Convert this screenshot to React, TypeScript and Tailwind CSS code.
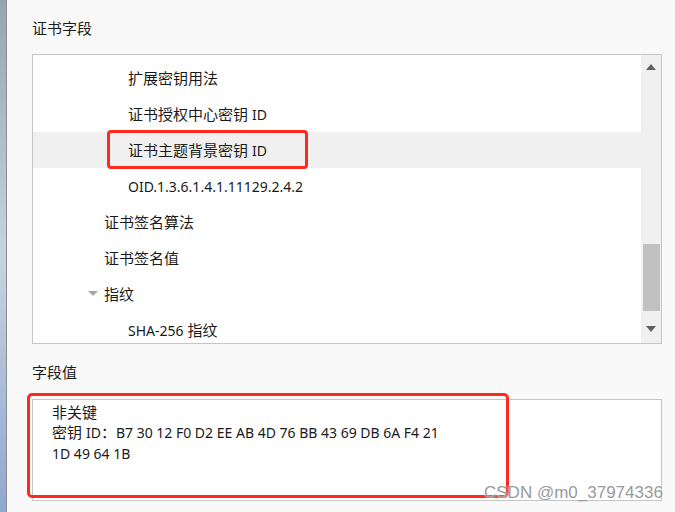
import { useState, type ReactNode } from "react";

type Row = { label: ReactNode; key: string; level: 1 | 2; expanded?: boolean };

// latin runs are a touch narrower in the original (Segoe UI), so render them at 14px
const L = ({ children }: { children: ReactNode }) => (
	<span className="text-[14px]">{children}</span>
);

const rows: Row[] = [
	{ key: "eku", label: "扩展密钥用法", level: 2 },
	{ key: "aki", label: <>证书授权中心密钥 <L>ID</L></>, level: 2 },
	{ key: "ski", label: <>证书主题背景密钥 <L>ID</L></>, level: 2 },
	{ key: "oid", label: <L>OID.1.3.6.1.4.1.11129.2.4.2</L>, level: 2 },
	{ key: "alg", label: "证书签名算法", level: 1 },
	{ key: "sig", label: "证书签名值", level: 1 },
	{ key: "fp", label: "指纹", level: 1, expanded: true },
	{ key: "sha", label: <><L>SHA-256</L> 指纹</>, level: 2 },
];

const font = {
	fontFamily: '"Noto Sans", "Noto Sans CJK SC", sans-serif',
};

export default function App() {
	const [selected, setSelected] = useState(2);

	return (
		<div
			className="relative flex h-[512px] w-[675px] overflow-hidden bg-[#f9f9f9] text-[15px] text-[#1a1a1a]"
			style={font}
		>
			{/* blurred desktop behind the dialog */}
			<div className="h-full w-[6px] shrink-0 bg-gradient-to-b from-[#9aa3b0] via-[#c9d2e0] to-[#8fa8d0]" />
			<div className="h-full w-px shrink-0 bg-[#8c8c8c]" />

			<div className="flex flex-1 flex-col pl-[25px] pr-[13px]">
				<div className="mt-[17px] h-[22px] leading-[22px]">证书字段</div>

				<div className="mt-[15px] flex h-[290px] border border-[#c6c6c6] bg-white">
					<div className="flex-1 overflow-hidden pt-[5px]">
						{rows.map((r, i) => (
							<div
								key={r.key}
								onClick={() => setSelected(i)}
								className={
									"relative flex h-9 shrink-0 items-center " +
									(i === selected ? "bg-[#f0f0f0]" : "")
								}
							>
								{r.expanded && (
									<svg
										className="absolute left-[55px] top-[15px]"
										width="10"
										height="6"
										viewBox="0 0 10 6"
									>
										<path d="M0 0H10L5 5Z" fill="#a6a6a6" />
									</svg>
								)}
								<span className={r.level === 2 ? "pl-[95px]" : "pl-[71px]"}>
									{r.label}
								</span>
							</div>
						))}
					</div>

					{/* scrollbar */}
					<div className="flex w-[20px] flex-col items-center bg-[#f0f0f0]">
						<svg className="mt-[9px]" width="10" height="6" viewBox="0 0 10 6">
							<path d="M5 0L10 6H0Z" fill="#606060" />
						</svg>
						<div className="mt-[174px] h-[67px] w-[17px] bg-[#c1c1c1]" />
						<div className="flex-1" />
						<svg className="mb-[11px]" width="10" height="6" viewBox="0 0 10 6">
							<path d="M0 0H10L5 6Z" fill="#606060" />
						</svg>
					</div>
				</div>

				<div className="mt-[17px] h-[22px] leading-[22px]">字段值</div>

				<div className="mt-[16px] h-[102px] border border-[#c6c6c6] bg-white pl-[19px] pt-[2px] leading-[20px]">
					<div>非关键</div>
					<div>
						密钥 <L>ID</L>：<L>B7 30 12 F0 D2 EE AB 4D 76 BB 43 69 DB 6A F4 21</L>
					</div>
					<div>
						<L>1D 49 64 1B</L>
					</div>
				</div>
			</div>

			{/* red annotation boxes */}
			<div className="absolute left-[107px] top-[130px] h-[39px] w-[201px] rounded-[4px] border-[3px] border-[#ff2a1f]" />
			<div className="absolute left-[27px] top-[393px] h-[105px] w-[482px] rounded-[5px] border-[3px] border-[#ff2a1f]" />

			{/* watermark */}
			<div
				className="absolute left-[484px] top-[482px] text-[17px] leading-[22px] text-[#9a9a9a]"
				style={{ fontFamily: '"Liberation Sans", Arial, sans-serif', textShadow: "0 0 2px #fff" }}
			>
				CSDN @m0_37974336
			</div>
		</div>
	);
}
